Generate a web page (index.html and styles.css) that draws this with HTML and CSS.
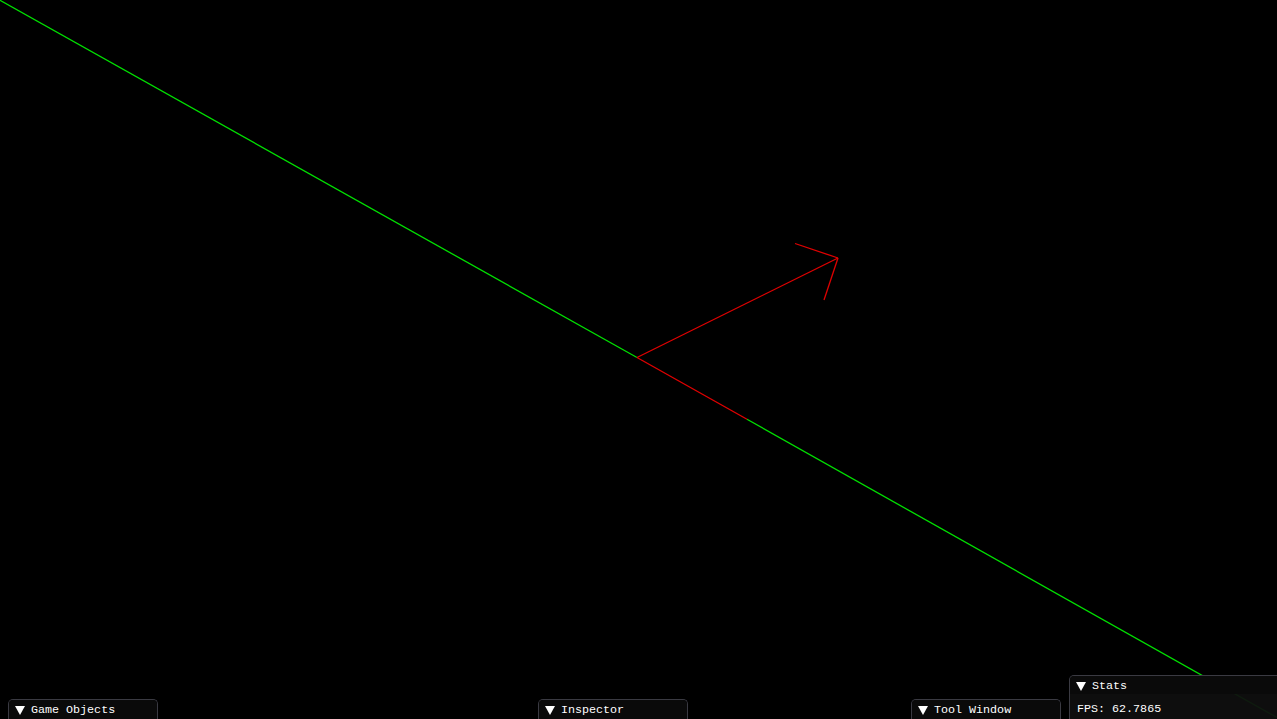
FILE: index.html
```html
<!DOCTYPE html>
<html lang="en">
  <head>
    <meta charset="UTF-8" />
    <meta name="viewport" content="width=device-width, initial-scale=1.0" />
    <title>scene</title>

    <link rel="stylesheet" href="styles.css">
  </head>
  <body>
    <div class="scene">
      <!-- 씬 뷰 : 평면과 법선 벡터 -->
      <svg class="canvas" viewBox="0 0 1277 719" width="1277" height="719">
        <line x1="0" y1="0.3" x2="637" y2="357.5" class="plane" />
        <line x1="747" y1="419.3" x2="1277" y2="717.5" class="plane" />
        <line x1="637" y1="357.5" x2="747" y2="419.3" class="normal" />
        <line x1="637" y1="357.5" x2="838" y2="258" class="normal" />
        <line x1="838" y1="258" x2="795" y2="243.5" class="normal" />
        <line x1="838" y1="258" x2="824" y2="300" class="normal" />
      </svg>

      <div class="win win-collapsed" style="left: 8px">
        <div class="win-title">
          <svg class="arrow" viewBox="0 0 10 9" width="10" height="9"><polygon points="0,0 10,0 5,9" /></svg>
          <span>Game Objects</span>
        </div>
      </div>

      <div class="win win-collapsed" style="left: 538px">
        <div class="win-title">
          <svg class="arrow" viewBox="0 0 10 9" width="10" height="9"><polygon points="0,0 10,0 5,9" /></svg>
          <span>Inspector</span>
        </div>
      </div>

      <div class="win win-collapsed" style="left: 911px">
        <div class="win-title">
          <svg class="arrow" viewBox="0 0 10 9" width="10" height="9"><polygon points="0,0 10,0 5,9" /></svg>
          <span>Tool Window</span>
        </div>
      </div>

      <div class="win win-stats">
        <div class="win-title">
          <svg class="arrow" viewBox="0 0 10 9" width="10" height="9"><polygon points="0,0 10,0 5,9" /></svg>
          <span>Stats</span>
        </div>
        <div class="win-body">
          <div>FPS: 62.7865</div>
        </div>
      </div>
    </div>
  </body>
</html>
```

FILE: styles.css
```css
html,
body {
  margin: 0;
  background: #000;
  overflow: hidden;
}

.scene {
  position: relative;
  width: 1277px;
  height: 719px;
  overflow: hidden;
  font-family: "Liberation Mono", "DejaVu Sans Mono", monospace;
  font-size: 11.7px;
  line-height: 13px;
  color: #fff;
}

.canvas {
  position: absolute;
  left: 0;
  top: 0;
}

.plane {
  stroke: #00e000;
  stroke-width: 1.3;
}

.normal {
  stroke: #e00000;
  stroke-width: 1.3;
}

.win {
  position: absolute;
  box-sizing: border-box;
  border: 1px solid #3a3a42;
  border-bottom: none;
  border-radius: 5px 5px 0 0;
  overflow: hidden;
}

.win-collapsed {
  top: 699px;
  width: 150px;
  height: 24px;
  background: #0a0a0a;
}

.win-title {
  display: flex;
  align-items: center;
  gap: 6px;
  box-sizing: border-box;
  height: 19px;
  padding: 1px 0 0 6px;
  background: #0a0a0a;
  white-space: pre;
}

.arrow {
  display: block;
  fill: #fff;
}

.win-stats {
  left: 1069px;
  top: 675px;
  width: 230px;
  height: 50px;
  background: rgba(15, 15, 15, 0.94);
}

.win-stats .win-title {
  height: 18px;
  padding-top: 2px;
}

.win-body {
  padding: 9px 7px 0;
}
```
